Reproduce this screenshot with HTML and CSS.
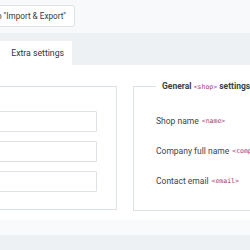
FILE: index.html
```html
<!DOCTYPE html>
<html lang="en">
<head>
  <meta charset="UTF-8" />
  <meta name="viewport" content="width=device-width, initial-scale=1.0" />
  <title>Shop settings</title>
  <link rel="stylesheet" href="styles.css">
</head>
<body>
  <div class="page">

    <!-- Toolbar -->
    <div class="toolbar">
      <div class="toolbar-inner">
        <button type="button" class="btn">Go to "Import &amp; Export"</button>
      </div>
    </div>

    <!-- Tabs -->
    <div class="tabs">
      <div class="tabs-inner">
        <div class="tab active">Extra settings</div>
      </div>
    </div>

    <!-- Settings panels -->
    <div class="content">
      <fieldset class="panel panel-left">
        <div class="rows">
          <input type="text" class="field" />
          <input type="text" class="field" />
          <input type="text" class="field" />
        </div>
      </fieldset>

      <fieldset class="panel panel-right">
        <legend>General <code>&lt;shop&gt;</code> settings</legend>
        <div class="rows">
          <label>Shop name <code>&lt;name&gt;</code></label>
          <label>Company full name <code>&lt;company&gt;</code></label>
          <label>Contact email <code>&lt;email&gt;</code></label>
        </div>
      </fieldset>
    </div>

    <div class="band"></div>
    <div class="footer-bar"></div>
  </div>
</body>
</html>
```

FILE: styles.css
```css
body, html {
  margin: 0;
  padding: 0;
  font-family: Roboto, 'Liberation Sans', sans-serif;
  background: #ffffff;
  overflow: hidden;
}
.page {
  width: 520px;
  margin-left: -120px;
}
.toolbar {
  height: 33px;
  box-sizing: border-box;
  padding-top: 5px;
  background: #f8f9fa;
}
.toolbar-inner {
  width: 195px;
  display: flex;
  justify-content: flex-end;
}
.btn {
  height: 22px;
  padding: 0 8px;
  font-family: inherit;
  font-size: 8.2px;
  color: #333a40;
  background: #ffffff;
  border: 1px solid #dfe3e7;
  border-radius: 3px;
}
.tabs {
  height: 32px;
  box-sizing: border-box;
  padding-top: 8px;
  background: #eef1f4;
}
.tabs-inner {
  width: 192px;
  display: flex;
  justify-content: flex-end;
}
.tab {
  height: 24px;
  line-height: 24px;
  padding: 0 8px 0 40px;
  font-size: 8.7px;
  color: #2f363c;
}
.tab.active {
  background: #ffffff;
}
.content {
  display: grid;
  grid-template-columns: 237px 200px;
  align-items: start;
  gap: 16px;
  padding: 15px 0 9px;
  background: #ffffff;
}
.panel {
  margin: 0;
  min-width: 0;
  border: 1px solid #dbe2e8;
  padding: 19px 19px 17px 20px;
}
.panel-left {
  margin-top: 6px;
  padding-top: 24px;
}
.panel legend {
  padding: 0 6px;
  line-height: 12px;
  font-size: 8.5px;
  font-weight: bold;
  color: #3a4148;
}
.panel-right {
  padding: 17px 22px 19px;
}
.rows {
  display: grid;
  grid-auto-rows: 21px;
  gap: 9px;
}
.field {
  width: 100%;
  box-sizing: border-box;
  margin: 0;
  border: 1px solid #dde3e8;
  border-radius: 1px;
  background: #ffffff;
}
.rows label {
  display: flex;
  align-items: center;
  gap: 3px;
  font-size: 8.5px;
  color: #3b4550;
  white-space: nowrap;
}
code {
  font-family: 'DejaVu Sans Mono', monospace;
  font-size: 6.5px;
  font-weight: normal;
  color: #a8356e;
}
.band {
  height: 15px;
  background: #f9fafb;
}
.footer-bar {
  height: 20px;
  background: #eef1f4;
}
```
